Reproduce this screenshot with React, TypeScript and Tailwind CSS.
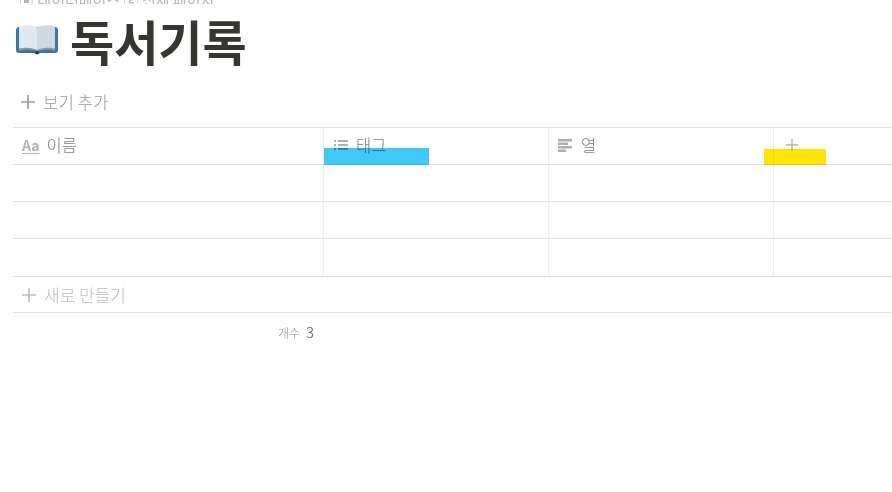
const FONT = "font-['Noto_Sans_CJK_KR','Noto_Sans',sans-serif]";

function Plus({ className }: { className: string }) {
  return (
    <svg viewBox="0 0 14 14" className={className} fill="currentColor">
      <path d="M6.200 0h1.600v6.200H14v1.600H7.800V14H6.200V7.800H0V6.200h6.200z" />
    </svg>
  );
}

function Book() {
  return (
    <svg viewBox="0 0 42 32" className="w-[42px] h-[32px]">
      <path d="M3 3C1 3 0 4.500 0 6v20c0 2 1 3 3 3h15c1 0 1.500 1.500 3 1.500s2-1.500 3-1.500h15c2 0 3-1 3-3V6c0-1.500-1-3-3-3z" fill="#3b78a8" />
      <path d="M3 27C9 25 16 25 21 28C26 25 33 25 39 27V24H3z" fill="#8d99a3" />
      <path d="M3 2.500C9 .5 16 1 21 3.500V26C16 23.500 9 23 3 24.500z" fill="#e1e8ef" />
      <path d="M39 2.500C33 .5 26 1 21 3.500V26C26 23.500 33 23 39 24.500z" fill="#cdd8e1" />
      <path d="M19.500 27h3v3h-3z" fill="#2b3640" />
    </svg>
  );
}

function Row({ tall }: { tall?: boolean }) {
  return (
    <div className={`grid grid-cols-[311px_225px_225px_1fr] border-b border-[#e2e2e1] ${tall ? "h-[38px]" : "h-[37px]"}`}>
      <div className="border-r border-[#ededec]" />
      <div className="border-r border-[#ededec]" />
      <div className="border-r border-[#ededec]" />
      <div />
    </div>
  );
}

export default function App() {
  return (
    <div className={`${FONT} w-[892px] h-[492px] overflow-hidden bg-white relative`}>
      {/* Breadcrumb, cut off by the top of the window */}
      <div className="h-[4px] overflow-hidden pl-[19px] flex items-end text-[15px] leading-[18px] text-[#b5b4b1]">
        <span className="shrink-0 whitespace-nowrap -mb-[5px]">▣ 데이터베이스 ⓖ 전체 페이지</span>
      </div>

      {/* Title */}
      <div className="flex items-center h-[72px] pl-[16px]">
        <Book />
        <h1 className="ml-[12px] text-[48px] leading-[56px] font-bold text-[#37352f]">독서기록</h1>
      </div>

      {/* Add view */}
      <div className="flex items-center h-[51px] pl-[21px] text-[#9b9a97]">
        <Plus className="w-[14px] h-[14px]" />
        <span className="ml-[8px] text-[16.800px] font-light leading-[20px]">보기 추가</span>
      </div>

      <div className="ml-[13px]">
        {/* Header */}
        <div className="grid grid-cols-[311px_225px_225px_1fr] h-[38px] border-y border-[#e2e2e1] text-[16.500px] font-light text-[#7f7e7a]">
          <div className="border-r border-[#ededec] flex items-center pl-[9px] pb-[2px]">
            <span className="text-[14px] font-semibold text-[#b3b2af] underline underline-offset-2 leading-none">Aa</span>
            <span className="ml-[7px]">이름</span>
          </div>
          <div className="border-r border-[#ededec] flex items-center pl-[10px] pb-[2px]">
            <svg viewBox="0 0 14 10" className="w-[14px] h-[10px]" fill="#aeaeab">
              <path d="M0 0h2v2H0zM4 0h10v2H4zM0 4h2v2H0zM4 4h10v2H4zM0 8h2v2H0zM4 8h10v2H4z" />
            </svg>
            <span className="ml-[8px]">태그</span>
          </div>
          <div className="border-r border-[#ededec] flex items-center pl-[9px] pb-[2px]">
            <svg viewBox="0 0 14 13" className="w-[14px] h-[13px]" fill="#aeaeab">
              <path d="M0 0h14v2.400H0zM0 3.500h10v2.400H0zM0 7.100h14v2.400H0zM0 10.600h8V13H0z" />
            </svg>
            <span className="ml-[9px]">열</span>
          </div>
          <div className="flex items-center pl-[12px] pb-[2px] text-[#b5b4b1]">
            <Plus className="w-[12px] h-[12px]" />
          </div>
        </div>

        <Row />
        <Row />
        <Row tall />

        {/* New row */}
        <div className="flex items-center h-[36px] pl-[9px] text-[#bdbcb9] border-b border-[#e2e2e1]">
          <Plus className="w-[14px] h-[14px]" />
          <span className="ml-[8px] text-[17px] font-light leading-[20px]">새로 만들기</span>
        </div>

        {/* Count */}
        <div className="flex justify-end items-baseline w-[301px] h-[40px] pt-[8px]">
          <span className="text-[12px] font-light text-[#8f8e8a]">개수</span>
          <span className="ml-[6px] text-[15px] font-light text-[#55534e]">3</span>
        </div>
      </div>

      {/* Highlight blocks painted over the header */}
      <div className="absolute left-[324px] top-[148px] w-[105px] h-[17px] bg-[#41c8fa] mix-blend-multiply" />
      <div className="absolute left-[764px] top-[149px] w-[62px] h-[16px] bg-[#ffe600] mix-blend-multiply" />
    </div>
  );
}
